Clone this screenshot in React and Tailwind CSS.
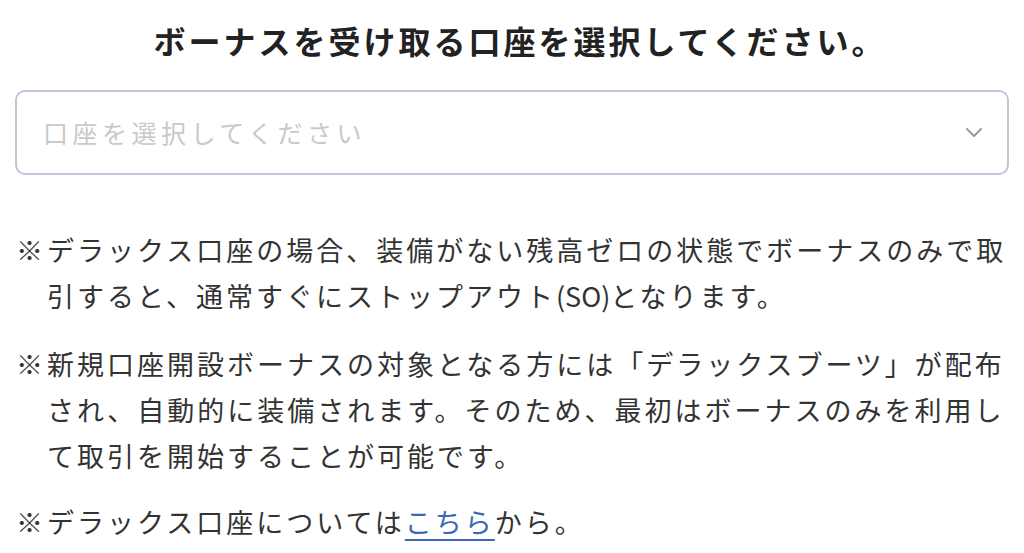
import React from 'react';

const jp = { fontFamily: '"Noto Sans CJK JP", "Noto Sans", sans-serif' };

export default function App() {
  return (
    <div className="min-h-[553px] w-[1024px] bg-white px-[15px] text-[#333]" style={jp}>
      {/* Title */}
      <h1 className="pt-[17px] pl-[16px] text-center text-[32px] leading-[46px] font-semibold tracking-[3px] text-[#222]">
        ボーナスを受け取る口座を選択してください。
      </h1>

      {/* Account select */}
      <div className="mt-[27px] flex h-[85px] items-center justify-between rounded-[10px] border-2 border-[#c2c6da] pl-[26px] pr-[24px]">
        <span className="text-[25px] tracking-[4.5px] text-[#c9c9c9]">口座を選択してください</span>
        <svg width="18" height="11" viewBox="0 0 18 11" fill="none">
          <path d="M2 2l7 7 7-7" stroke="#9b9b9b" strokeWidth="2" strokeLinecap="round" strokeLinejoin="round" />
        </svg>
      </div>

      {/* Notes */}
      <div className="mt-[52px] pl-[1px] text-[27px] leading-[46px] tracking-[3px] whitespace-nowrap">
        <div className="flex">
          <span className="w-[31px] shrink-0">※</span>
          <p>
            デラックス口座の場合、装備がない残高ゼロの状態でボーナスのみで取<br />
            引すると、通常すぐにストップアウト<span className="tracking-normal">(SO)</span>となります。
          </p>
        </div>
        <div className="mt-[22px] flex">
          <span className="w-[31px] shrink-0">※</span>
          <p>
            新規口座開設ボーナスの対象となる方には「デラックスブーツ」が配布<br />
            され、自動的に装備されます。そのため、最初はボーナスのみを利用し<br />
            て取引を開始することが可能です。
          </p>
        </div>
        <div className="mt-[20px] flex">
          <span className="w-[31px] shrink-0">※</span>
          <p>
            デラックス口座については
            <a href="#" className="text-[#3a68b4] underline decoration-2 underline-offset-[6px]">こちら</a>
            から。
          </p>
        </div>
      </div>
    </div>
  );
}
